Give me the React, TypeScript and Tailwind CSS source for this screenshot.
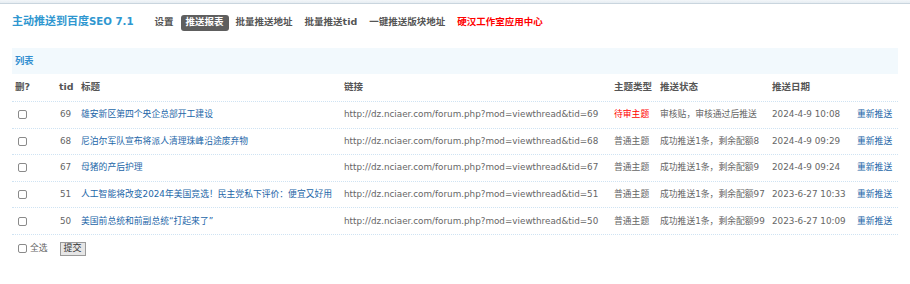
import React from "react";

const FONT = '"DejaVu Sans", "Noto Sans CJK SC", sans-serif';

type Row = {
  tid: number;
  title: string;
  type: string;
  pending?: boolean;
  status: string;
  date: string;
};

const rows: Row[] = [
  { tid: 69, title: "雄安新区第四个央企总部开工建设", type: "待审主题", pending: true, status: "审核贴，审核通过后推送", date: "2024-4-9 10:08" },
  { tid: 68, title: "尼泊尔军队宣布将派人清理珠峰沿途废弃物", type: "普通主题", status: "成功推送1条，剩余配额8", date: "2024-4-9 09:29" },
  { tid: 67, title: "母猪的产后护理", type: "普通主题", status: "成功推送1条，剩余配额9", date: "2024-4-9 09:24" },
  { tid: 51, title: "人工智能将改变2024年美国竞选！民主党私下评价：便宜又好用", type: "普通主题", status: "成功推送1条，剩余配额97", date: "2023-6-27 10:33" },
  { tid: 50, title: "美国前总统和前副总统“打起来了”", type: "普通主题", status: "成功推送1条，剩余配额99", date: "2023-6-27 10:09" },
];

const GRID = "grid grid-cols-[44px_22px_263px_270px_46px_112px_85px_44px]";

function Box() {
  return <span className="block w-[9px] h-[9px] border border-[#8a8a8a] rounded-[2px] bg-white" />;
}

export default function App() {
  return (
    <div className="w-[910px] min-h-[284px] bg-white text-[#666]" style={{ fontFamily: FONT }}>
      <div className="h-[4px] bg-gradient-to-b from-[#f3f6f9] to-[#e6edf2] border-b border-[#c9d5de]" />
      <div className="h-[37px] px-[12px] flex items-center">
        <div className="text-[11px] font-bold text-[#2f97d0] whitespace-nowrap">
          主动推送到百度<span className="text-[10.2px]">SEO 7.1</span>
        </div>
        <div className="ml-[16px] flex items-center gap-[2px] text-[9.5px] font-bold whitespace-nowrap">
          <span className="px-[5px] text-[#555]">设置</span>
          <span className="px-[5px] h-[16px] flex items-center rounded-[3px] bg-[#5e5e5e] text-white">推送报表</span>
          <span className="px-[5px] text-[#555]">批量推送地址</span>
          <span className="px-[5px] text-[#555]">批量推送tid</span>
          <span className="px-[5px] text-[#555]">一键推送版块地址</span>
          <span className="px-[5px] text-[#f00]">硬汉工作室应用中心</span>
        </div>
      </div>
      <div className="mx-[12px] mt-[7px]">
        <div className="h-[26px] bg-[#f2f9fd] flex items-center pl-[3px] text-[9.3px] font-bold text-[#2f8dd0]">列表</div>
        <div className={`${GRID} h-[28px] items-center border-b border-dotted border-[#cfe3f3] text-[9.5px] font-bold text-[#555] whitespace-nowrap`}>
          <div className="pl-[3px]">删?</div>
          <div className="pl-[3px]">tid</div>
          <div className="pl-[3px]">标题</div>
          <div className="pl-[3px]">链接</div>
          <div className="pl-[3px]">主题类型</div>
          <div className="pl-[3px]">推送状态</div>
          <div className="pl-[3px]">推送日期</div>
          <div />
        </div>
        {rows.map((r) => (
          <div
            key={r.tid}
            className={`${GRID} h-[26.6px] items-center border-b border-dotted border-[#cfe3f3] text-[8.8px] whitespace-nowrap`}
          >
            <div className="pl-[6px]"><Box /></div>
            <div className="pl-[4px] text-[#666]">{r.tid}</div>
            <div className="pl-[3px] text-[#2366a8] overflow-hidden">{r.title}</div>
            <div className="pl-[3px] text-[#666]">{`http://dz.nciaer.com/forum.php?mod=viewthread&tid=${r.tid}`}</div>
            <div className={`pl-[3px] ${r.pending ? "text-[#f00]" : "text-[#666]"}`}>{r.type}</div>
            <div className="pl-[3px] text-[#666]">{r.status}</div>
            <div className="pl-[3px] text-[#666]">{r.date}</div>
            <div className="pl-[3px] text-[#2366a8]">重新推送</div>
          </div>
        ))}
        <div className="mt-[7px] h-[14px] flex items-center text-[8.8px] whitespace-nowrap">
          <div className="pl-[6px]"><Box /></div>
          <span className="ml-[3px] text-[#666]">全选</span>
          <span className="ml-[12px] h-[14px] w-[26px] flex items-center justify-center border border-[#9a9a9a] bg-[#e6e6e6] text-[#333] text-[9px]">提交</span>
        </div>
      </div>
    </div>
  );
}
